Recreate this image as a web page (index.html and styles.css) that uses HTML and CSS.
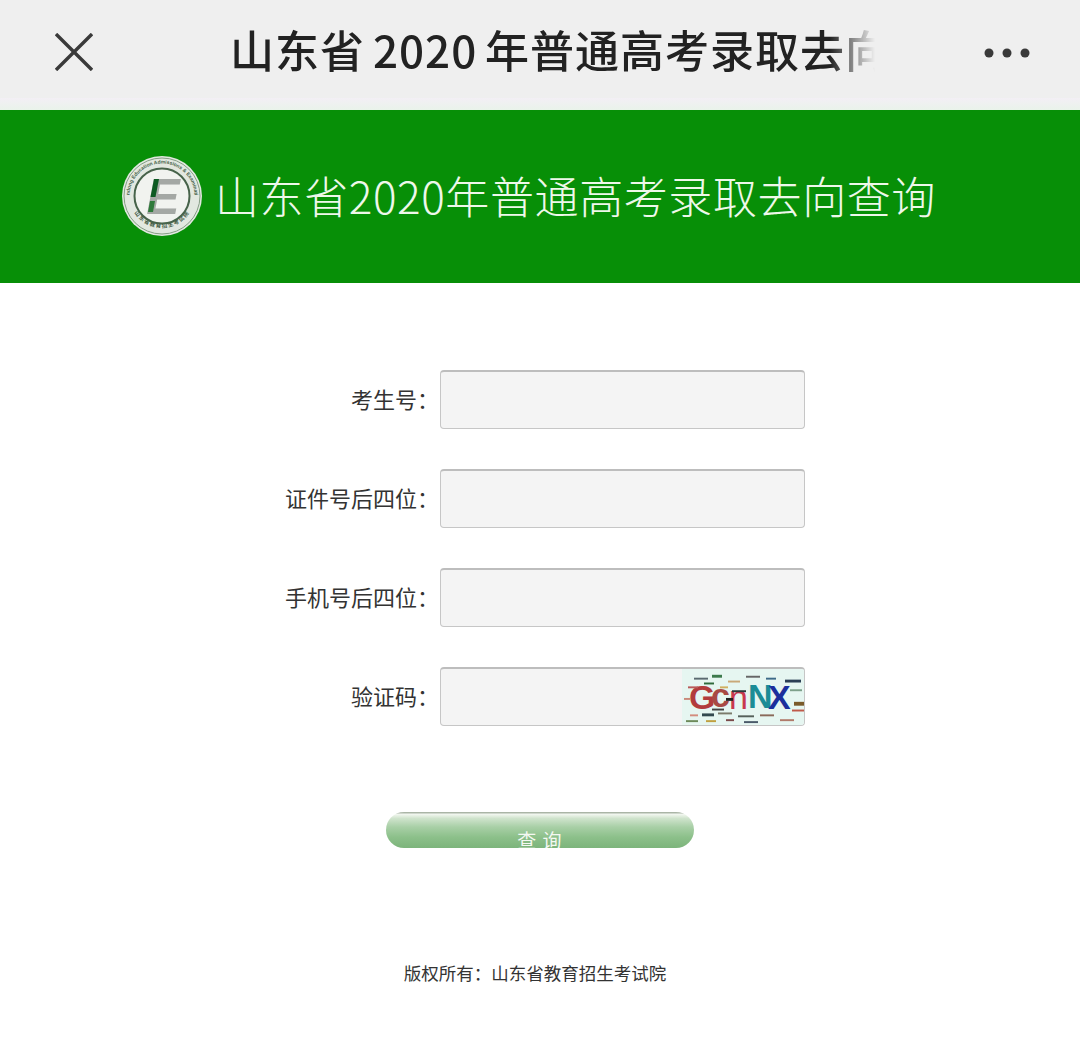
FILE: index.html
```html
<!DOCTYPE html>
<html lang="zh-CN">
<head>
<meta charset="utf-8">
<title>山东省2020年普通高考录取去向查询</title>
<link rel="stylesheet" href="styles.css">
</head>
<body>
<header class="nav">
  <svg class="nav-close" viewBox="0 0 38 38" aria-hidden="true"><path d="M1 1 L37 37 M37 1 L1 37"/></svg>
  <div class="nav-title">山东省 2020 年普通高考录取去向查询</div>
  <svg class="nav-more" viewBox="0 0 46 10" aria-hidden="true"><circle cx="5" cy="5" r="4.5"/><circle cx="23" cy="5" r="4.5"/><circle cx="41" cy="5" r="4.5"/></svg>
</header>
<section class="banner">
  <svg class="logo" viewBox="0 0 80 84" aria-hidden="true">
    <defs>
      <path id="arcTop" d="M7.5 42 A32.5 32.5 0 0 1 72.5 42"/>
      <path id="arcBot" d="M8 47 A32.5 32.5 0 0 0 72 47"/>
    </defs>
    <circle cx="40" cy="42" r="40" fill="#e2e8e0"/>
    <circle cx="40" cy="42" r="38" fill="none" stroke="#6d8a6d" stroke-width="0.8"/>
    <text class="logo-ring"><textPath href="#arcTop" startOffset="50%" text-anchor="middle">Shandong Education Admissions &amp; Examinations</textPath></text>
    <text class="logo-ring-cn"><textPath href="#arcBot" startOffset="50%" text-anchor="middle">山东省教育招生考试院</textPath></text>
    <circle cx="40" cy="42" r="27.5" fill="#f1f3ef" stroke="#47634a" stroke-width="2"/>
    <text class="logo-e" x="41" y="60" text-anchor="middle">E</text>
    <polygon points="32,25 37,25 33.5,43 28.5,43" fill="#0d5a22"/>
    <polygon points="28,47 33,47 31,58 26,58" fill="#2f7a3a"/>
  </svg>
  <h1 class="banner-title">山东省2020年普通高考录取去向查询</h1>
</section>
<main class="content">
  <form class="form">
    <label class="row"><span class="label">考生号：</span><span class="field"></span></label>
    <label class="row"><span class="label">证件号后四位：</span><span class="field"></span></label>
    <label class="row"><span class="label">手机号后四位：</span><span class="field"></span></label>
    <label class="row"><span class="label">验证码：</span><span class="field field-captcha">
      <svg class="captcha" viewBox="0 0 122 58" preserveAspectRatio="none" aria-hidden="true">
        <rect width="122" height="58" fill="#e6f6f1"/>
        <text class="cap cap-g" x="7" y="41">G</text>
        <text class="cap cap-c" x="29" y="39">c</text>
        <text class="cap cap-n" x="47" y="41">n</text>
        <text class="cap cap-N" x="66" y="40">N</text>
        <text class="cap cap-X" x="86" y="41">X</text>
        <g class="noise">
          <rect x="12" y="9" width="14" height="2" fill="#5a6a70"/><rect x="30" y="6" width="10" height="3" fill="#3c7a4c"/>
          <rect x="46" y="12" width="12" height="2" fill="#c9a878"/><rect x="64" y="7" width="14" height="2" fill="#666"/>
          <rect x="84" y="9" width="10" height="2" fill="#3d6a88"/><rect x="103" y="11" width="16" height="3" fill="#2b3f55"/>
          <rect x="6" y="18" width="10" height="2" fill="#b85b5b"/><rect x="108" y="21" width="12" height="2" fill="#7da08a"/>
          <rect x="112" y="34" width="10" height="4" fill="#7a5a2a"/><rect x="110" y="42" width="12" height="2" fill="#c05a4a"/>
          <rect x="8" y="47" width="8" height="2" fill="#d38d7e"/><rect x="20" y="46" width="12" height="3" fill="#33494f"/>
          <rect x="36" y="45" width="14" height="2" fill="#7b7b6b"/><rect x="56" y="48" width="16" height="2" fill="#55605a"/>
          <rect x="78" y="47" width="14" height="2" fill="#8a6a5a"/><rect x="98" y="52" width="14" height="2" fill="#b07a6a"/>
          <rect x="4" y="53" width="12" height="2" fill="#6d8a5a"/><rect x="24" y="53" width="10" height="2" fill="#c0a040"/>
          <rect x="44" y="52" width="8" height="2" fill="#7a4a4a"/><rect x="62" y="54" width="14" height="2" fill="#4a5a6a"/>
          <rect x="50" y="22" width="14" height="2" fill="#2b3a3a"/><rect x="30" y="41" width="12" height="2" fill="#444"/>
          <rect x="22" y="14" width="10" height="2" fill="#2f6a3c"/><rect x="38" y="18" width="8" height="2" fill="#d0b060"/>
          <rect x="2" y="30" width="6" height="2" fill="#c98a7a"/><rect x="44" y="30" width="7" height="3" fill="#222"/>
        </g>
      </svg>
    </span></label>
  </form>
  <button class="submit" type="button">查 询</button>
  <footer class="copyright">版权所有：山东省教育招生考试院</footer>
</main>
</body>
</html>
```
FILE: styles.css
```css
* {
  box-sizing: border-box;
}

html,
body {
  margin: 0;
  padding: 0;
  background: #fff;
}

body {
  width: 1080px;
  height: 1041px;
  overflow: hidden;
  font-family: "Noto Sans CJK SC", "Liberation Sans", sans-serif;
  color: #333;
}

.nav {
  height: 110px;
  padding: 0 50px 11px 55px;
  display: flex;
  align-items: center;
  background: linear-gradient(#efefef 0, #efefef 98px, #f3eff5 98px, #e9f3ea 110px);
}

.nav-close {
  width: 38px;
  height: 38px;
  flex: none;
  margin-top: 4px;
  fill: none;
  stroke: #3a3a3a;
  stroke-width: 3.4;
}

.nav-title {
  width: 645px;
  flex: none;
  margin-left: 137px;
  overflow: hidden;
  white-space: nowrap;
  font-size: 44px;
  font-weight: 500;
  line-height: 101px;
  letter-spacing: 1px;
  word-spacing: -3px;
  color: #222;
  -webkit-mask-image: linear-gradient(to right, #000 93%, transparent 100%);
  mask-image: linear-gradient(to right, #000 93%, transparent 100%);
}

.nav-more {
  width: 46px;
  height: 10px;
  flex: none;
  margin-left: 109px;
  margin-top: 6px;
  fill: #3a3a3a;
}

.banner {
  height: 173px;
  padding-left: 122px;
  display: flex;
  align-items: center;
  gap: 13px;
  background: #078f07;
}

.logo {
  width: 80px;
  height: 84px;
  flex: none;
  margin-top: -2px;
}

.logo-ring {
  font-size: 5px;
  font-weight: 700;
  font-family: "Liberation Sans", sans-serif;
  fill: #47634a;
}

.logo-ring-cn {
  font-size: 5.5px;
  font-weight: 700;
  letter-spacing: 1px;
  fill: #3e5842;
}

.logo-e {
  font-family: "Liberation Sans", sans-serif;
  font-size: 50px;
  font-weight: 700;
  font-style: italic;
  fill: #a4a8a4;
}

.banner-title {
  margin: 0 0 4px;
  font-size: 44px;
  font-weight: 300;
  letter-spacing: 0.6px;
  white-space: nowrap;
  color: #eef8ea;
}

.content {
  display: flex;
  flex-direction: column;
  align-items: center;
}

.form {
  width: 1080px;
  padding-top: 87px;
  display: flex;
  flex-direction: column;
  gap: 40px;
}

.row {
  height: 59px;
  display: flex;
  align-items: center;
}

.label {
  width: 440px;
  padding-right: 1px;
  margin-top: -4px;
  text-align: right;
  font-size: 22px;
  color: #333;
}

.field {
  width: 365px;
  height: 59px;
  display: block;
  overflow: hidden;
  border: 1px solid #c6c6c6;
  border-top: 2px solid #bdbdbd;
  border-radius: 4px;
  background: #f4f4f4;
}

.field-captcha {
  display: flex;
  justify-content: flex-end;
}

.captcha {
  width: 122px;
  height: 100%;
  flex: none;
}

.cap {
  font-family: "Liberation Sans", sans-serif;
  font-size: 34px;
  font-weight: 700;
}

.cap-g {
  fill: #b23c3c;
}

.cap-c {
  fill: #a84a44;
}

.cap-n {
  font-weight: 400;
  fill: #c8384f;
}

.cap-N {
  fill: #1c8c96;
}

.cap-X {
  fill: #1c2f9c;
}

.submit {
  width: 308px;
  height: 36px;
  margin-top: 86px;
  padding: 14px 0 0;
  display: block;
  overflow: hidden;
  border: 0;
  border-radius: 18px;
  background: linear-gradient(#aab5a6 0, #aab5a6 1px, #f4f8f2 2px, #cfe3cc 18%, #a8cfa6 42%, #8cc08a 70%, #7cb47b 100%);
  font-family: inherit;
  font-size: 19px;
  line-height: 28px;
  letter-spacing: 1px;
  color: #f4f8f2;
}

.copyright {
  margin-top: 112px;
  padding-right: 10px;
  font-size: 17.5px;
  line-height: 26px;
  color: #333;
}
```
